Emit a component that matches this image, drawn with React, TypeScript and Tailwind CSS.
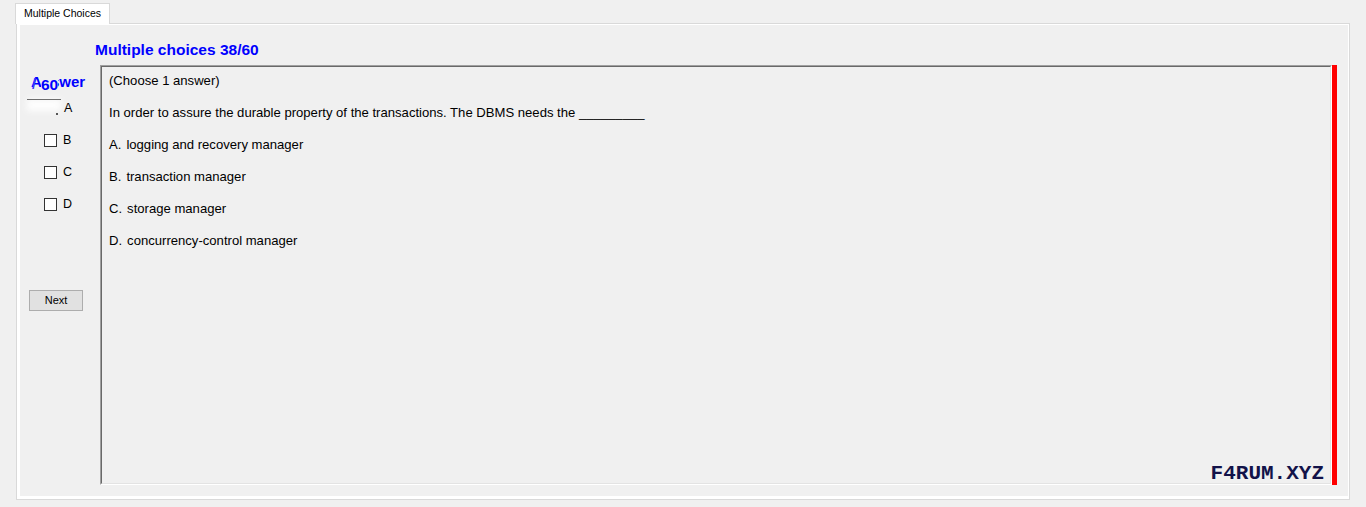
import React from 'react';

const OPTIONS: [string, string][] = [
  ['A.', 'logging and recovery manager'],
  ['B.', 'transaction manager'],
  ['C.', 'storage manager'],
  ['D.', 'concurrency-control manager'],
];

function CheckRow({ label }: { label: string }) {
  return (
    <div className="flex h-[13px] items-center">
      <div className="ml-[24px] h-[13px] w-[13px] border border-[#333333] bg-white" />
      <span className="ml-[6px] text-[12.5px] leading-[13px] text-black">{label}</span>
    </div>
  );
}

export default function App() {
  return (
    <div
      className="h-[507px] w-[1366px] overflow-hidden bg-[#f0f0f0] pt-[3px] pl-[15px]"
      style={{ fontFamily: '"Liberation Sans", Arial, sans-serif' }}
    >
      {/* Tab header */}
      <div className="relative z-10 -mb-px flex h-[21px] w-[95px] items-center border border-b-0 border-[#d9d9d9] bg-white pl-[8px] text-[10.5px] text-black">
        Multiple Choices
      </div>

      {/* Tab page */}
      <div className="ml-px h-[477px] w-[1334px] border border-[#d9d9d9]">
        <div className="flex h-full flex-col border-t border-r border-b-[3px] border-l-[3px] border-white">
          <div className="h-[40px] pt-[16px] pl-[75px] text-[15.5px] leading-[18px] font-bold text-[#0000ff]">
            Multiple choices 38/60
          </div>

          <div className="flex h-[420px]">
            {/* Answer column */}
            <div className="flex w-[80px] flex-col">
              <div className="relative mt-[8px] pl-[11px] text-[15px] leading-[17px] font-bold text-[#0000ff]">
                Answer
                <span className="absolute top-[3px] left-[12px] text-[14px] leading-[16px] text-[#3a3aff]">/</span>
                <span className="absolute top-[3px] left-[21px] bg-[#f0f0f0] text-[15.5px] leading-[17px]">60</span>
              </div>

              <div className="mt-[12px] flex flex-col gap-[19px]">
                <div className="relative flex h-[13px] items-center">
                  <div className="absolute top-[-3px] left-[7px] h-[12px] w-[34px] bg-white opacity-90 blur-[3px]" />
                  <div className="absolute top-[-3px] left-[7px] h-px w-[34px] bg-[#6e6e6e]" />
                  <div className="absolute top-[11px] left-[36px] h-[2px] w-[2px] bg-[#555555]" />
                  <span className="relative ml-[44px] text-[12.5px] leading-[13px] text-black">A</span>
                </div>
                <CheckRow label="B" />
                <CheckRow label="C" />
                <CheckRow label="D" />
              </div>

              <button className="mt-[79px] ml-[9px] flex h-[21px] w-[54px] items-center justify-center border border-[#adadad] bg-[#e1e1e1] text-[11px] text-black">
                Next
              </button>
            </div>

            {/* Question box */}
            <div className="w-[1232px] border-t border-r border-b border-l border-t-[#a0a0a0] border-r-white border-b-white border-l-[#a0a0a0]">
              <div className="flex h-full flex-col border-t border-r border-b border-l border-t-[#696969] border-r-[#e3e3e3] border-b-[#e3e3e3] border-l-[#696969] pt-[6px] pl-[7px] text-[13.1px] leading-[15px] text-black">
                <div className="flex flex-col gap-[17px]">
                  <div>(Choose 1 answer)</div>
                  <div>In order to assure the durable property of the transactions. The DBMS needs the _________</div>
                  {OPTIONS.map(([k, v]) => (
                    <div key={k} className="flex">
                      <span>{k}</span>
                      <span className="ml-[5px]">{v}</span>
                    </div>
                  ))}
                </div>
                <div
                  className="mt-auto -mb-[2px] self-end pr-[6px] text-[21px] leading-[22px] font-bold text-[#121249]"
                  style={{ fontFamily: '"Liberation Mono", "DejaVu Sans Mono", monospace' }}
                >
                  F4RUM.XYZ
                </div>
              </div>
            </div>

            <div className="w-[5px] bg-[#ff0000]" />
          </div>
        </div>
      </div>
    </div>
  );
}
